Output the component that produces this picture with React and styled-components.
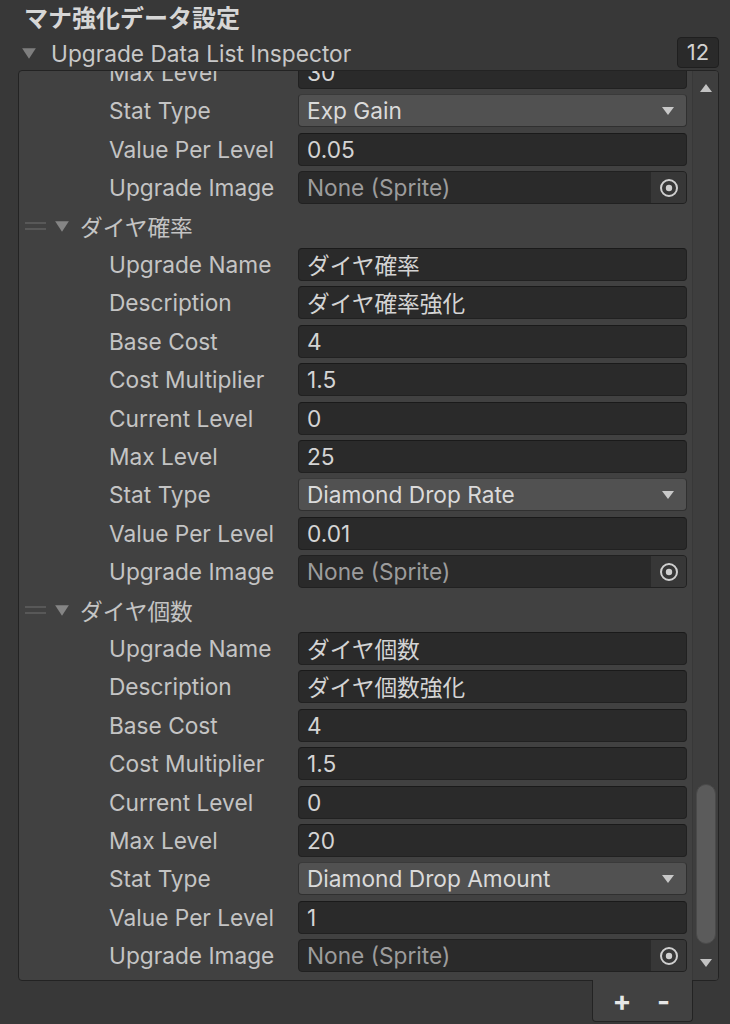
import React from "react"
import styled, { createGlobalStyle } from 'styled-components';

const GlobalStyle = createGlobalStyle`
  html, body {
    margin: 0;
    padding: 0;
    background: #383838;
  }
  body {
    font-family: Inter, "Noto Sans CJK JP", sans-serif;
    color: #c4c4c4;
  }
`

const ROW_H = 38.4

const items = [
  {
    title: null,
    fields: [
      { label: 'Max Level', kind: 'text', value: '30' },
      { label: 'Stat Type', kind: 'enum', value: 'Exp Gain' },
      { label: 'Value Per Level', kind: 'text', value: '0.05' },
      { label: 'Upgrade Image', kind: 'object', value: 'None (Sprite)' },
    ],
  },
  {
    title: 'ダイヤ確率',
    fields: [
      { label: 'Upgrade Name', kind: 'text', value: 'ダイヤ確率' },
      { label: 'Description', kind: 'text', value: 'ダイヤ確率強化' },
      { label: 'Base Cost', kind: 'text', value: '4' },
      { label: 'Cost Multiplier', kind: 'text', value: '1.5' },
      { label: 'Current Level', kind: 'text', value: '0' },
      { label: 'Max Level', kind: 'text', value: '25' },
      { label: 'Stat Type', kind: 'enum', value: 'Diamond Drop Rate' },
      { label: 'Value Per Level', kind: 'text', value: '0.01' },
      { label: 'Upgrade Image', kind: 'object', value: 'None (Sprite)' },
    ],
  },
  {
    title: 'ダイヤ個数',
    fields: [
      { label: 'Upgrade Name', kind: 'text', value: 'ダイヤ個数' },
      { label: 'Description', kind: 'text', value: 'ダイヤ個数強化' },
      { label: 'Base Cost', kind: 'text', value: '4' },
      { label: 'Cost Multiplier', kind: 'text', value: '1.5' },
      { label: 'Current Level', kind: 'text', value: '0' },
      { label: 'Max Level', kind: 'text', value: '20' },
      { label: 'Stat Type', kind: 'enum', value: 'Diamond Drop Amount' },
      { label: 'Value Per Level', kind: 'text', value: '1' },
      { label: 'Upgrade Image', kind: 'object', value: 'None (Sprite)' },
    ],
  },
]

const Caret = ({ up, w = 14, h = 10 }) => (
  <svg width={w} height={h} viewBox="0 0 14 10" preserveAspectRatio="none">
    <path d={up ? "M1 9 L7 1 L13 9 Z" : "M1 1 L13 1 L7 9 Z"} fill="currentColor" />
  </svg>
)

const PickerIcon = () => (
  <svg width="20" height="20" viewBox="0 0 20 20">
    <circle cx="10" cy="10" r="8" fill="none" stroke="currentColor" strokeWidth="2" />
    <circle cx="10" cy="10" r="3.2" fill="currentColor" />
  </svg>
)

const Field = ({ kind, value }) => {
  if (kind === 'enum') {
    return (
      <EnumBox>
        <span>{value}</span>
        <EnumArrow><Caret /></EnumArrow>
      </EnumBox>
    )
  }
  if (kind === 'object') {
    return (
      <ObjectBox>
        <ObjectText>{value}</ObjectText>
        <Picker><PickerIcon /></Picker>
      </ObjectBox>
    )
  }
  return <TextBox>{value}</TextBox>
}

const App = () => {
  return (
    <>
      <GlobalStyle />
      <Page>
        <Title>マナ強化データ設定</Title>
        <Foldout>
          <FoldTriangle><Caret w={16} h={13} /></FoldTriangle>
          <FoldLabel>Upgrade Data List Inspector</FoldLabel>
          <Count>12</Count>
        </Foldout>
        <Panel>
          <Viewport>
            <Content>
              {items.map((item, i) => (
                <React.Fragment key={i}>
                  {item.title && (
                    <ElementHeader>
                      <Handle><span /><span /></Handle>
                      <HeaderTriangle><Caret w={16} h={13} /></HeaderTriangle>
                      <span>{item.title}</span>
                    </ElementHeader>
                  )}
                  {item.fields.map((f, j) => (
                    <Row key={j}>
                      <Label>{f.label}</Label>
                      <Field {...f} />
                    </Row>
                  ))}
                </React.Fragment>
              ))}
            </Content>
          </Viewport>
          <Scrollbar>
            <ScrollArrow><Caret up /></ScrollArrow>
            <Track>
              <Thumb />
            </Track>
            <ScrollArrow><Caret /></ScrollArrow>
          </Scrollbar>
        </Panel>
        <Footer>
          <FooterBox>
            <FooterButton>+</FooterButton>
            <FooterButton>-</FooterButton>
          </FooterBox>
        </Footer>
      </Page>
    </>
  )
}

export default App

const Page = styled.div`
  width: 730px;
  height: 1024px;
  box-sizing: border-box;
  padding: 4px 11px 0 18px;
  display: flex;
  flex-direction: column;
  overflow: hidden;
`

const Title = styled.div`
  font-size: 24px;
  font-weight: 700;
  color: #d6d6d6;
  line-height: 30px;
  padding-left: 6px;
  height: 32px;
`

const Foldout = styled.div`
  display: flex;
  align-items: center;
  height: 34px;
`

const FoldTriangle = styled.span`
  color: #7e7e7e;
  display: flex;
  width: 30px;
  padding-left: 3px;
`

const FoldLabel = styled.span`
  font-size: 22.7px;
  color: #c8c8c8;
  flex: 1;
`

const Count = styled.div`
  width: 42px;
  height: 31px;
  box-sizing: border-box;
  background: #2a2a2a;
  border: 1px solid #1f1f1f;
  border-radius: 4px;
  font-size: 22px;
  color: #d2d2d2;
  display: flex;
  align-items: center;
  justify-content: center;
  margin-bottom: 2px;
`

const Panel = styled.div`
  height: 911px;
  box-sizing: border-box;
  background: #414141;
  border: 1px solid #232323;
  border-radius: 4px;
  display: flex;
  overflow: hidden;
`

const Viewport = styled.div`
  flex: 1;
  overflow: hidden;
  font-size: 22.7px;
`

const Content = styled.div`
  margin-top: -17.6px;
  padding-right: 5px;
`

const Row = styled.div`
  height: ${ROW_H}px;
  display: grid;
  grid-template-columns: 279px 1fr;
  align-items: center;
`

const Label = styled.div`
  padding-left: 90px;
  color: #c4c4c4;
  white-space: nowrap;
`

const boxBase = `
  height: 33px;
  box-sizing: border-box;
  border-radius: 4px;
  display: flex;
  align-items: center;
  padding-left: 8px;
  white-space: nowrap;
  overflow: hidden;
`

const TextBox = styled.div`
  ${boxBase}
  background: #2a2a2a;
  border: 1px solid #212121;
  border-top-color: #1a1a1a;
  color: #d4d4d4;
`

const EnumBox = styled.div`
  ${boxBase}
  background: #515151;
  border: 1px solid #303030;
  border-top-color: #3a3a3a;
  color: #dadada;
  justify-content: space-between;
`

const EnumArrow = styled.span`
  display: flex;
  color: #c8c8c8;
  padding-right: 11px;
`

const ObjectBox = styled.div`
  ${boxBase}
  background: #2a2a2a;
  border: 1px solid #212121;
  padding-right: 0;
`

const ObjectText = styled.span`
  flex: 1;
  color: #9c9c9c;
`

const Picker = styled.span`
  width: 35px;
  align-self: stretch;
  background: #373737;
  color: #cfcfcf;
  display: flex;
  align-items: center;
  justify-content: center;
`

const ElementHeader = styled.div`
  height: ${ROW_H}px;
  display: flex;
  align-items: center;
  color: #c4c4c4;
`

const Handle = styled.div`
  width: 21px;
  margin-left: 6px;
  display: flex;
  flex-direction: column;
  gap: 4px;
  span {
    display: block;
    height: 2px;
    background: #585858;
  }
`

const HeaderTriangle = styled.span`
  color: #858585;
  display: flex;
  margin-left: 8px;
  width: 26px;
`

const Scrollbar = styled.div`
  width: 25px;
  background: #3e3e3e;
  border-left: 1px solid #383838;
  display: flex;
  flex-direction: column;
  align-items: center;
`

const ScrollArrow = styled.div`
  height: 34px;
  display: flex;
  align-items: center;
  color: #c2c2c2;
`

const Track = styled.div`
  flex: 1;
  width: 100%;
  position: relative;
`

const Thumb = styled.div`
  position: absolute;
  left: 3px;
  right: 2px;
  bottom: 2px;
  height: 160px;
  border-radius: 10px;
  background: #5b5b5b;
  border: 1px solid #4a4a4a;
  box-sizing: border-box;
`

const Footer = styled.div`
  display: flex;
  justify-content: flex-end;
  padding-right: 26px;
`

const FooterBox = styled.div`
  width: 101px;
  height: 42px;
  box-sizing: border-box;
  margin-top: -1px;
  background: #414141;
  border: 1px solid #232323;
  border-top: none;
  border-radius: 0 0 4px 4px;
  display: flex;
  align-items: center;
  justify-content: center;
  gap: 24px;
`

const FooterButton = styled.span`
  font-size: 28px;
  font-weight: 700;
  color: #e6e6e6;
  line-height: 1;
  width: 18px;
  text-align: center;
`
